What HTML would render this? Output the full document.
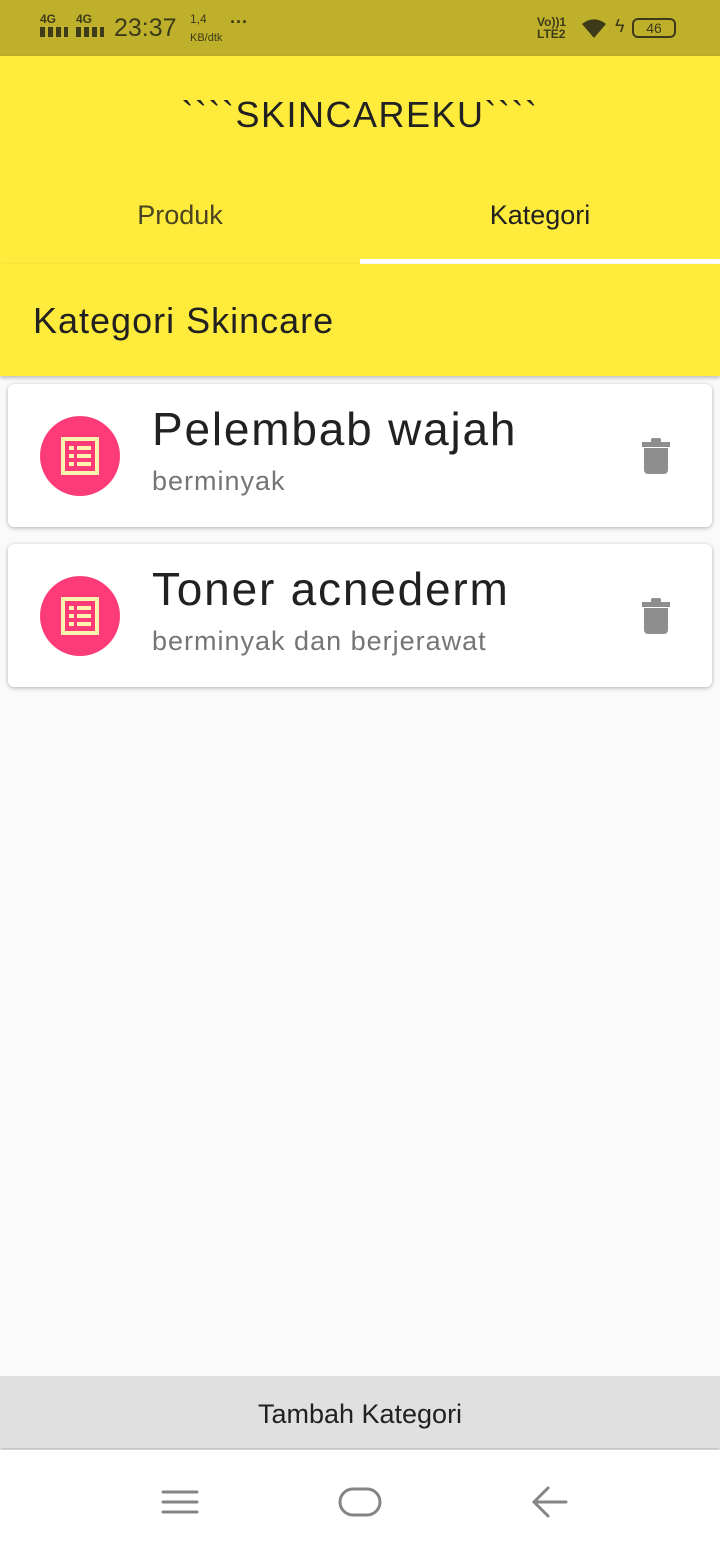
<!DOCTYPE html>
<html><head><meta charset="utf-8"><style>
*{margin:0;padding:0;box-sizing:border-box}
body{width:720px;height:1544px;background:#fafafa;font-family:"Liberation Sans",sans-serif;position:relative;overflow:hidden;color:#212121}
.abs{position:absolute}
.card{position:absolute;left:8px;width:704px;height:143px;background:#fff;border-radius:6px;box-shadow:0 1px 4px rgba(0,0,0,.3)}
.av{position:absolute;left:32px;top:32px;width:80px;height:80px;border-radius:50%;background:#fe3b79}
.t{position:absolute;left:144px;font-size:46px;color:#212121;letter-spacing:1.8px}
.s{position:absolute;left:144px;font-size:27px;color:#757575;letter-spacing:1px}
</style></head><body>
<div class="abs" style="left:0;top:0;width:720px;height:56px;background:#bfb02c;color:#3d3a1a">
 <div class="abs" style="left:40px;top:12px;font-size:12px;font-weight:bold">4G</div>
 <div class="abs" style="left:76px;top:12px;font-size:12px;font-weight:bold">4G</div>
 <div class="abs" style="left:40px;top:27px;width:28px;height:10px;background:repeating-linear-gradient(90deg,#3d3a1a 0 5px,transparent 5px 8px)"></div>
 <div class="abs" style="left:76px;top:27px;width:28px;height:10px;background:repeating-linear-gradient(90deg,#3d3a1a 0 5px,transparent 5px 8px)"></div>
 <div class="abs" style="left:114px;top:14px;font-size:25px">23:37</div>
 <div class="abs" style="left:190px;top:12px;font-size:12px">1,4</div>
 <div class="abs" style="left:190px;top:32px;font-size:11px">KB/dtk</div>
 <div class="abs" style="left:230px;top:12px;font-size:18px;font-weight:bold">···</div>
 <div class="abs" style="left:537px;top:16px;font-size:12px;font-weight:bold;line-height:12px">Vo))1<br>LTE2</div>
 <svg class="abs" style="left:580px;top:16px" width="28" height="24" viewBox="0 0 28 24"><path d="M14 22L2 8a18 18 0 0 1 24 0z" fill="#3d3a1a"/></svg>
 <div class="abs" style="left:615px;top:16px;font-size:18px">ϟ</div>
 <div class="abs" style="left:632px;top:18px;width:44px;height:20px;border:2px solid #3d3a1a;border-radius:6px;font-size:14px;text-align:center;line-height:16px">46</div>
</div>
<div class="abs" style="left:0;top:56px;width:720px;height:208px;background:#ffeb3b;box-shadow:0 2px 4px rgba(0,0,0,.25)">
 <div class="abs" style="left:0;top:38px;width:720px;text-align:center;font-size:36px;color:#212121;letter-spacing:1.5px">&#96;&#96;&#96;&#96;SKINCAREKU&#96;&#96;&#96;&#96;</div>
 <div class="abs" style="left:0;top:144px;width:360px;text-align:center;font-size:27px;color:#4a4520">Produk</div>
 <div class="abs" style="left:360px;top:144px;width:360px;text-align:center;font-size:27px;color:#212121">Kategori</div>
 <div class="abs" style="left:360px;top:203px;width:360px;height:5px;background:#fff"></div>
</div>
<div class="abs" style="left:0;top:264px;width:720px;height:112px;background:#ffeb3b;box-shadow:0 2px 4px rgba(0,0,0,.25)">
 <div class="abs" style="left:33px;top:36px;font-size:36px;color:#212121;letter-spacing:1px">Kategori Skincare</div>
</div>
<div class="card" style="top:384px">
 <div class="av"><svg width="80" height="80" viewBox="0 0 80 80"><rect x="23" y="23" width="34" height="34" fill="none" stroke="#fff3b0" stroke-width="4"/><g fill="#fff3b0"><rect x="29" y="30" width="5" height="4"/><rect x="37" y="30" width="14" height="4"/><rect x="29" y="38" width="5" height="4"/><rect x="37" y="38" width="14" height="4"/><rect x="29" y="46" width="5" height="4"/><rect x="37" y="46" width="14" height="4"/></g></svg></div>
 <div class="t" style="top:18px">Pelembab wajah</div>
 <div class="s" style="top:82px">berminyak</div>
 <svg class="abs" style="left:632px;top:52px" width="32" height="40" viewBox="0 0 32 40"><rect x="2" y="6" width="28" height="5" fill="#8e8e8e"/><rect x="11" y="2" width="10" height="5" rx="2" fill="#8e8e8e"/><path d="M4 12h24v22a4 4 0 0 1-4 4H8a4 4 0 0 1-4-4z" fill="#8e8e8e"/></svg>
</div>
<div class="card" style="top:544px">
 <div class="av"><svg width="80" height="80" viewBox="0 0 80 80"><rect x="23" y="23" width="34" height="34" fill="none" stroke="#fff3b0" stroke-width="4"/><g fill="#fff3b0"><rect x="29" y="30" width="5" height="4"/><rect x="37" y="30" width="14" height="4"/><rect x="29" y="38" width="5" height="4"/><rect x="37" y="38" width="14" height="4"/><rect x="29" y="46" width="5" height="4"/><rect x="37" y="46" width="14" height="4"/></g></svg></div>
 <div class="t" style="top:18px">Toner acnederm</div>
 <div class="s" style="top:82px">berminyak dan berjerawat</div>
 <svg class="abs" style="left:632px;top:52px" width="32" height="40" viewBox="0 0 32 40"><rect x="2" y="6" width="28" height="5" fill="#8e8e8e"/><rect x="11" y="2" width="10" height="5" rx="2" fill="#8e8e8e"/><path d="M4 12h24v22a4 4 0 0 1-4 4H8a4 4 0 0 1-4-4z" fill="#8e8e8e"/></svg>
</div>
<div class="abs" style="left:0;top:1376px;width:720px;height:72px;background:#e0e0e0;box-shadow:0 2px 3px rgba(0,0,0,.25);text-align:center;line-height:76px;font-size:27px;color:#212121">Tambah Kategori</div>
<div class="abs" style="left:0;top:1450px;width:720px;height:94px;background:#fff">
 <svg class="abs" style="left:0;top:0" width="720" height="94" viewBox="0 0 720 94"><g stroke="#858585" stroke-width="3" fill="none" stroke-linecap="round"><path d="M163 42h34M163 52h34M163 62h34"/><rect x="340" y="39" width="40" height="26" rx="13"/><path d="M534 52h32M548 38l-14 14 14 14"/></g></svg>
</div>
</body></html>
